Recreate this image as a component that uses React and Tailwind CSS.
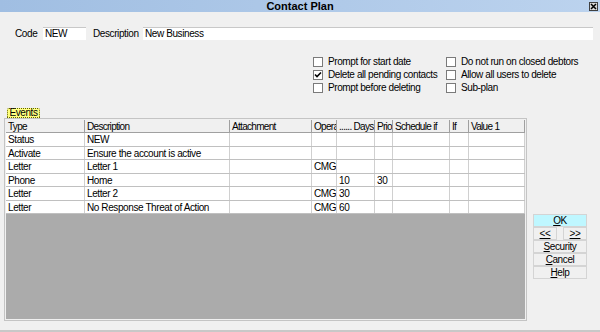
const cols = [
    {key: 'type', label: 'Type', w: 'w-[79px]'},
    {key: 'desc', label: 'Description', w: 'w-[145px]'},
    {key: 'att', label: 'Attachment', w: 'w-[82px]'},
    {key: 'op', label: 'Opera', w: 'w-[25px]'},
    {key: 'days', label: '...... Days', w: 'w-[38px]'},
    {key: 'prior', label: 'Prior', w: 'w-[18px]'},
    {key: 'sched', label: 'Schedule if', w: 'w-[57px]'},
    {key: 'if', label: 'If', w: 'w-[19px]'},
    {key: 'val', label: 'Value 1', w: 'w-[56px]'},
];

const rows = [
    {type: 'Status', desc: 'NEW'},
    {type: 'Activate', desc: 'Ensure the account is active'},
    {type: 'Letter', desc: 'Letter 1', op: 'CMG'},
    {type: 'Phone', desc: 'Home', days: '10', prior: '30'},
    {type: 'Letter', desc: 'Letter 2', op: 'CMG', days: '30'},
    {type: 'Letter', desc: 'No Response Threat of Action', op: 'CMG', days: '60'},
];

const Check = ({checked, label}) => (
    <div className="flex items-center h-[13px] whitespace-nowrap">
        <div className="w-[10px] h-[10px] border border-[#7a7a7a] bg-white flex items-center justify-center shrink-0">
            {checked && (
                <svg width="8" height="8" viewBox="0 0 8 8">
                    <path d="M1 3.5 L3 5.5 L7 1.5" stroke="#000" strokeWidth="1.6" fill="none" />
                </svg>
            )}
        </div>
        <span className="ml-[5px]">{label}</span>
    </div>
);

const Btn = ({children, className = ''}) => (
    <div
        className={`h-[13px] border border-[#d4d4d4] flex items-center justify-center leading-none ${className}`}
    >
        {children}
    </div>
);

export default function App() {
    return (
        <div
            className="w-[600px] h-[332px] bg-[#f0f0f0] text-[10px] tracking-[-0.4px] text-black flex flex-col border-b-2 border-[#c8c8c8] overflow-hidden"
            style={{fontFamily: '"Liberation Sans", Arial, sans-serif'}}
        >
            {/* title bar */}
            <div className="h-[12px] bg-gradient-to-r from-[#a0bee2] to-[#bcd3ee] relative flex items-center justify-center">
                <span className="font-bold leading-none text-[11px] tracking-normal">Contact Plan</span>
                <div className="absolute right-[2px] top-[2px] w-[9px] h-[9px] bg-[#d8d8d8] border border-[#404040] flex items-center justify-center">
                    <svg width="7" height="7" viewBox="0 0 7 7">
                        <path d="M1 1 L6 6 M6 1 L1 6" stroke="#000" strokeWidth="1.5" />
                    </svg>
                </div>
            </div>

            {/* code / description */}
            <div className="flex items-center mt-[15px] h-[13px]">
                <span className="ml-[15px] w-[28px]">Code</span>
                <div className="w-[43px] h-[13px] bg-white border-t border-[#c8c8c8] px-[2px] leading-[12px]">NEW</div>
                <span className="ml-[7px] w-[50px]">Description</span>
                <div className="w-[450px] h-[13px] bg-white border-t border-[#c8c8c8] px-[2px] leading-[12px]">New Business</div>
            </div>

            {/* options */}
            <div className="flex mt-[15px] ml-[313px] gap-0">
                <div className="w-[133px] flex flex-col">
                    <Check label="Prompt for start date" />
                    <Check checked label="Delete all pending contacts" />
                    <Check label="Prompt before deleting" />
                </div>
                <div className="flex flex-col">
                    <Check label="Do not run on closed debtors" />
                    <Check label="Allow all users to delete" />
                    <Check label="Sub-plan" />
                </div>
            </div>

            {/* events tab */}
            <div className="mt-[14px] ml-[7px] h-[10px] w-[33px] bg-[#ffff80] border border-dotted border-[#606000] rounded-t-[2px] flex items-center justify-center leading-none">
                Events
            </div>

            <div className="flex">
                {/* grid */}
                <div className="ml-[4px] w-[523px] h-[203px] border border-[#c4c4c4] p-[1px] flex flex-col">
                    <div className="flex h-[13px] bg-[#f0f0f0] border-b border-[#a0a0a0] tracking-[-0.7px]">
                        {cols.map((c) => (
                            <div
                                key={c.key}
                                className={`${c.w} shrink-0 border-r border-[#a0a0a0] pl-[2px] leading-[13px] whitespace-nowrap overflow-hidden`}
                            >
                                {c.label}
                            </div>
                        ))}
                    </div>
                    {rows.map((r, i) => (
                        <div key={i} className="flex h-[13.5px] bg-white border-b border-[#c0c0c0]">
                            {cols.map((c) => (
                                <div
                                    key={c.key}
                                    className={`${c.w} shrink-0 border-r border-[#d0d0d0] px-[2px] leading-[13px] whitespace-nowrap overflow-hidden`}
                                >
                                    {r[c.key] || ''}
                                </div>
                            ))}
                        </div>
                    ))}
                    <div className="flex-1 bg-[#ababab]" />
                </div>

                {/* buttons */}
                <div className="ml-[6px] mt-[96px] w-[54px] flex flex-col">
                    <Btn className="bg-[#bff7ff] border-[#b0d0d8]">
                        <span className="underline">O</span>K
                    </Btn>
                    <div className="flex justify-between">
                        <Btn className="w-[24px]">
                            <span className="underline">&lt;&lt;</span>
                        </Btn>
                        <Btn className="w-[24px]">
                            <span className="underline">&gt;&gt;</span>
                        </Btn>
                    </div>
                    <Btn>
                        <span className="underline">S</span>ecurity
                    </Btn>
                    <Btn>
                        <span className="underline">C</span>ancel
                    </Btn>
                    <Btn>
                        <span className="underline">H</span>elp
                    </Btn>
                </div>
            </div>
        </div>
    );
}
